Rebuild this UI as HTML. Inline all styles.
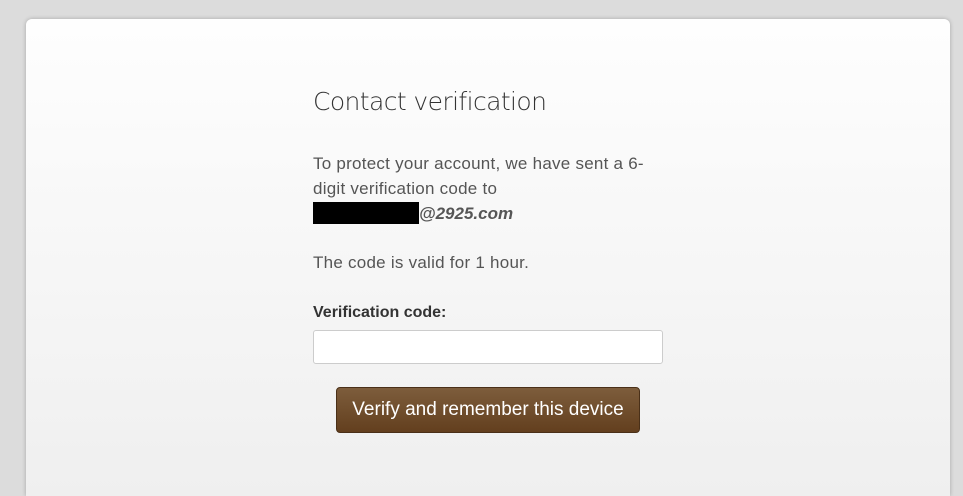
<!DOCTYPE html>
<html><head><style>
html,body{margin:0;width:963px;height:496px;background:#dcdcdc;overflow:hidden;font-family:"Liberation Sans",sans-serif;}
.card{position:absolute;left:26px;top:19px;width:924px;height:477px;border-radius:6px 6px 0 0;background:linear-gradient(#fefefe,#efefef);box-shadow:0 0 4px rgba(0,0,0,.25);}
h1{position:absolute;left:313px;top:87px;margin:0;font-size:25px;color:#333;font-family:"DejaVu Sans","Liberation Sans",sans-serif;font-weight:200;letter-spacing:-0.6px;}
.p{position:absolute;left:313px;top:151px;line-height:25px;font-size:17px;letter-spacing:0.25px;color:#555;width:345px;}
.red{display:inline-block;width:106px;height:22px;background:#000;vertical-align:-5px;}
.em{font-weight:bold;font-style:italic;color:#555;letter-spacing:0;}
.v{position:absolute;left:313px;top:253px;font-size:17px;letter-spacing:0.25px;color:#555;}
.l{position:absolute;left:313px;top:304px;font-size:16px;font-weight:bold;color:#333;}
.in{position:absolute;left:313px;top:330px;width:348px;height:32px;border:1px solid #ccc;border-radius:3px;background:#fff;}
.b{position:absolute;left:336px;top:387px;width:302px;height:44px;border:1px solid #4a3018;border-radius:4px;background:linear-gradient(#7d5d3c,#633f1e);color:#fff;font-size:19px;text-align:center;line-height:44px;}
</style></head><body>
<div class="card"></div>
<h1>Contact verification</h1>
<div class="p">To protect your account, we have sent a 6-digit verification code to<br><span class="red"></span><span class="em">@2925.com</span></div>
<div class="v">The code is valid for 1 hour.</div>
<div class="l">Verification code:</div>
<div class="in"></div>
<div class="b">Verify and remember this device</div>
</body></html>
